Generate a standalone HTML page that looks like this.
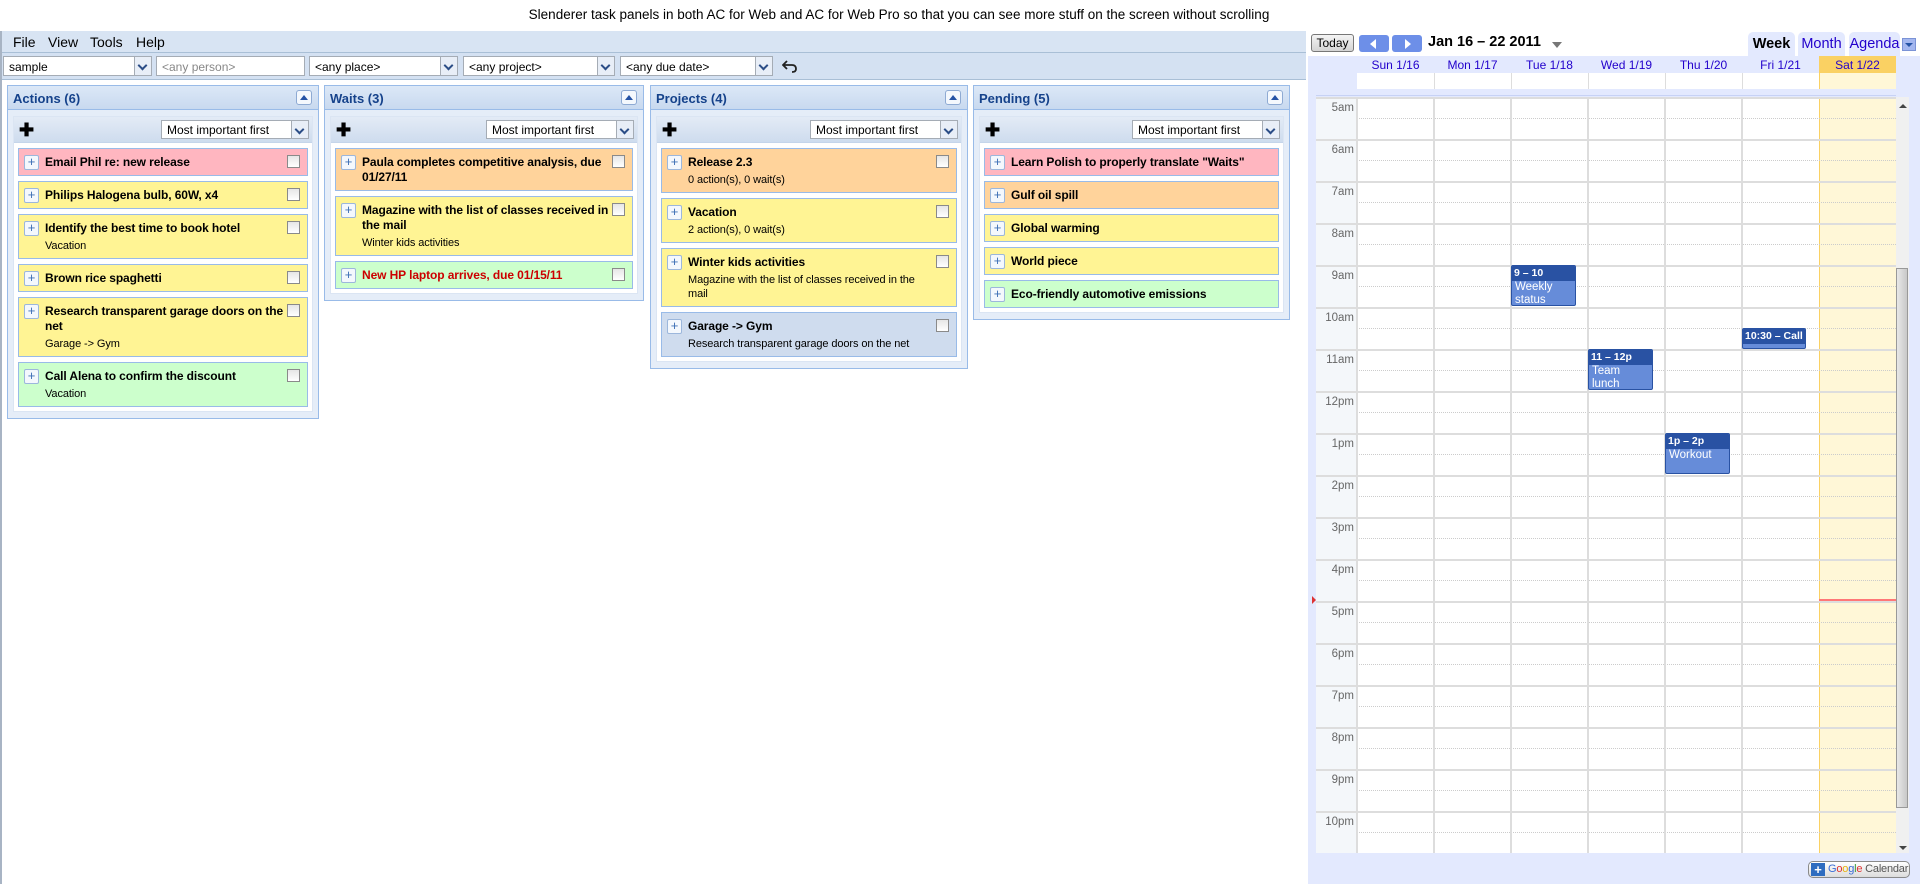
<!DOCTYPE html>
<html><head><meta charset="utf-8"><style>
*{box-sizing:border-box;margin:0;padding:0}
body{width:1920px;height:884px;overflow:hidden;background:#fff;font-family:"Liberation Sans",Arial,sans-serif;position:relative}
.abs{position:absolute}
#title{left:0;width:1798px;top:7px;text-align:center;font-size:13.5px;color:#000}
#left{left:0;top:31px;width:1306px;height:853px;border-left:2px solid #a8b4c4}
#menu{left:2px;top:31px;width:1304px;height:22px;background:#d8e4f3;border-bottom:1px solid #a9bfd6;font-size:14px}
#menu span{position:absolute;top:3px}
#filt{left:2px;top:53px;width:1304px;height:27px;background:#d4e1f2;border-bottom:1px solid #a9bfd6}
.inp{position:absolute;top:3px;height:20px;background:#fff;border:1px solid #a5acb5;font-size:12px;padding:3px 0 0 5px;color:#000}
.inp .dd{position:absolute;right:0;top:0;width:17px;height:18px;border-left:1px solid #a5acb5;background:#e8eef7}
.dd:after{content:"";position:absolute;left:4px;top:5px;width:5px;height:5px;border-right:2px solid #2b4d86;border-bottom:2px solid #2b4d86;transform:rotate(45deg)}
.panel{position:absolute;top:85px;background:#e5edf8;border:1px solid #99bbe8;padding-bottom:6px}
.ph{height:24px;background:linear-gradient(#dce8f7,#c8d9ef);border-bottom:1px solid #99bbe8;font-weight:bold;color:#15428b;font-size:13px;padding:5px 0 0 5px;position:relative}
.cb{position:absolute;right:6px;top:4px;width:16px;height:15px;border:1px solid #8eaad3;border-radius:3px;background:#f4f8fd}
.cb:after{content:"";position:absolute;left:3px;top:4px;border-left:4px solid transparent;border-right:4px solid transparent;border-bottom:5px solid #2553a5}
.sub{margin:6px 5px 0 5px;background:#fff;border:1px solid #dbe5f3;padding-bottom:4px}
.tb{height:26px;background:linear-gradient(#e3ebf6,#cedcee);position:relative;border-bottom:1px solid #c5d5ea}
.plus{position:absolute;left:5px;top:4px;font-size:18px;line-height:18px;color:#000;font-weight:bold}
.sel{position:absolute;right:3px;top:3px;width:148px;height:19px;background:#fff;border:1px solid #a5acb5;font-size:12px;padding:2px 0 0 5px}
.sel .dd{position:absolute;right:0;top:0;width:17px;height:17px;border-left:1px solid #a5acb5;background:#e8eef7}
.it{margin:5px 4px 0 4px;border:1px solid #99bbe8;padding:6px 20px 5px 26px;position:relative;font-size:12px;line-height:15px;font-weight:bold;letter-spacing:-0.1px}
.it .p{position:absolute;left:5px;top:6px;width:15px;height:15px;border:1px solid #9cb7dc;border-radius:2px;background:#f4f8fd;color:#3d6fb5;font-size:13px;line-height:12px;text-align:center;font-weight:normal}
.it .c{position:absolute;right:7px;top:6px;width:13px;height:13px;border:1px solid #8a8a8a;background:linear-gradient(#e6e6e6,#fff)}
.it small{display:block;font-weight:normal;font-size:11px;line-height:14px;margin-top:3px}
.pk{background:#ffb6c0}.ye{background:#fff494}.or{background:#ffd39b}.gr{background:#ccffcc}.bl{background:#cfdcee}
#cal{left:1308px;top:31px;width:612px;height:853px;background:#e3e9fe}
.btn{position:absolute;border-radius:3px}
.tab{position:absolute;top:32px;height:25px;background:#e3e9fe;border-radius:5px 5px 0 0;font-size:14.5px;color:#2200cc;text-align:center;padding-top:4px;white-space:nowrap}
.dh{position:absolute;top:56px;height:17px;font-size:12px;color:#2200cc;text-align:center;padding-top:2px;width:77px}
.grid{position:absolute;left:1316px;top:97px;width:580px;height:756px;background:#fff;overflow:hidden}
.hl{position:absolute;left:0;width:580px;height:0;border-top:2px solid #ddd}
.hh{position:absolute;left:41px;width:539px;height:0;border-top:1px dotted #ccc}
.tl{position:absolute;left:0;width:38px;text-align:right;font-size:11.5px;color:#666}
.vl{position:absolute;top:0;height:756px;border-left:2px solid #ddd}
.ev{position:absolute;border:1px solid #2952a3;border-radius:2px;background:#668cd9;color:#fff;font-size:11.5px;line-height:13px;overflow:hidden}
.ev b{display:block;background:#2952a3;font-size:10.5px;padding:1px 2px;white-space:nowrap}
.ev span{display:block;padding:0 3px}
</style></head><body>
<div id="title" class="abs">Slenderer task panels in both AC for Web and AC for Web Pro so that you can see more stuff on the screen without scrolling</div>
<div id="left" class="abs"></div>
<div id="menu" class="abs"><span style="left:11px">File</span><span style="left:46px">View</span><span style="left:88px">Tools</span><span style="left:134px">Help</span></div>
<div id="filt" class="abs">
<div class="inp" style="left:1px;width:149px">sample<div class="dd"></div></div>
<div class="inp" style="left:154px;width:149px;color:#888">&lt;any person&gt;</div>
<div class="inp" style="left:307px;width:149px">&lt;any place&gt;<div class="dd"></div></div>
<div class="inp" style="left:461px;width:152px">&lt;any project&gt;<div class="dd"></div></div>
<div class="inp" style="left:618px;width:153px">&lt;any due date&gt;<div class="dd"></div></div>
<svg class="abs" style="left:780px;top:6px" width="16" height="14" viewBox="0 0 16 14"><path d="M5 2 L1 6 L5 10 M1 6 H10 Q14 6 14 10 Q14 13 10 13" fill="none" stroke="#222" stroke-width="1.8"/></svg>
</div>

<div class="panel" style="left:7px;width:312px"><div class="ph">Actions (6)<div class="cb"></div></div><div class="sub"><div class="tb"><div class="plus">✚</div><div class="sel">Most important first<div class="dd"></div></div></div>
<div class="it pk"><div class="p">+</div>Email Phil re: new release<div class="c"></div></div>
<div class="it ye"><div class="p">+</div>Philips Halogena bulb, 60W, x4<div class="c"></div></div>
<div class="it ye"><div class="p">+</div>Identify the best time to book hotel<small>Vacation</small><div class="c"></div></div>
<div class="it ye"><div class="p">+</div>Brown rice spaghetti<div class="c"></div></div>
<div class="it ye"><div class="p">+</div>Research transparent garage doors on the net<small>Garage -&gt; Gym</small><div class="c"></div></div>
<div class="it gr"><div class="p">+</div>Call Alena to confirm the discount<small>Vacation</small><div class="c"></div></div>
</div></div>

<div class="panel" style="left:324px;width:320px"><div class="ph">Waits (3)<div class="cb"></div></div><div class="sub"><div class="tb"><div class="plus">✚</div><div class="sel">Most important first<div class="dd"></div></div></div>
<div class="it or"><div class="p">+</div>Paula completes competitive analysis, due 01/27/11<div class="c"></div></div>
<div class="it ye"><div class="p">+</div>Magazine with the list of classes received in the mail<small>Winter kids activities</small><div class="c"></div></div>
<div class="it gr" style="color:#cc0000"><div class="p">+</div>New HP laptop arrives, due 01/15/11<div class="c"></div></div>
</div></div>

<div class="panel" style="left:650px;width:318px"><div class="ph">Projects (4)<div class="cb"></div></div><div class="sub"><div class="tb"><div class="plus">✚</div><div class="sel">Most important first<div class="dd"></div></div></div>
<div class="it or"><div class="p">+</div>Release 2.3<small>0 action(s), 0 wait(s)</small><div class="c"></div></div>
<div class="it ye"><div class="p">+</div>Vacation<small>2 action(s), 0 wait(s)</small><div class="c"></div></div>
<div class="it ye"><div class="p">+</div>Winter kids activities<small>Magazine with the list of classes received in the mail</small><div class="c"></div></div>
<div class="it bl"><div class="p">+</div>Garage -&gt; Gym<small>Research transparent garage doors on the net</small><div class="c"></div></div>
</div></div>

<div class="panel" style="left:973px;width:317px"><div class="ph">Pending (5)<div class="cb"></div></div><div class="sub"><div class="tb"><div class="plus">✚</div><div class="sel">Most important first<div class="dd"></div></div></div>
<div class="it pk" style="padding-right:6px"><div class="p">+</div>Learn Polish to properly translate "Waits"</div>
<div class="it or"><div class="p">+</div>Gulf oil spill</div>
<div class="it ye"><div class="p">+</div>Global warming</div>
<div class="it ye"><div class="p">+</div>World piece</div>
<div class="it gr"><div class="p">+</div>Eco-friendly automotive emissions</div>
</div></div>

<div id="cal" class="abs"></div>
<div class="abs" style="left:1308px;top:31px;width:612px;height:25px;background:#fff"></div>
<div class="btn abs" style="left:1311px;top:34px;width:43px;height:18px;border:1px solid #777;background:linear-gradient(#f4f4f4,#d4d4d4);font-size:12px;text-align:center;padding-top:1px">Today</div>
<div class="btn abs" style="left:1359px;top:35px;width:30px;height:17px;background:#6d8fe8"><div style="position:absolute;left:11px;top:4px;border-top:5px solid transparent;border-bottom:5px solid transparent;border-right:6px solid #fff"></div></div>
<div class="btn abs" style="left:1392px;top:35px;width:30px;height:17px;background:#6d8fe8"><div style="position:absolute;left:13px;top:4px;border-top:5px solid transparent;border-bottom:5px solid transparent;border-left:6px solid #fff"></div></div>
<div class="abs" style="left:1428px;top:34px;font-size:14.5px;font-weight:bold">Jan 16 – 22 2011</div>
<div class="abs" style="left:1552px;top:42px;border-left:5px solid transparent;border-right:5px solid transparent;border-top:6px solid #777"></div>
<div class="tab" style="left:1748px;width:47px;color:#000;font-weight:bold">Week</div>
<div class="tab" style="left:1798px;width:47px">Month</div>
<div class="tab" style="left:1849px;width:51px">Agenda</div>
<div class="abs" style="left:1902px;top:38px;width:14px;height:13px;background:#a4b7ef;border:1px solid #7b93d6"><div style="position:absolute;left:2px;top:4px;border-left:4px solid transparent;border-right:4px solid transparent;border-top:4px solid #2553a5"></div></div>
<div class="dh" style="left:1357px">Sun 1/16</div><div class="dh" style="left:1434px">Mon 1/17</div><div class="dh" style="left:1511px">Tue 1/18</div><div class="dh" style="left:1588px">Wed 1/19</div><div class="dh" style="left:1665px">Thu 1/20</div><div class="dh" style="left:1742px">Fri 1/21</div><div class="dh" style="left:1819px;background:#fad163">Sat 1/22</div>
<div class="abs" style="left:1357px;top:73px;width:539px;height:16px;background:#fff"></div>
<div class="abs" style="left:1819px;top:73px;width:77px;height:16px;background:#fff7d7"></div>
<div class="abs" style="left:1434px;top:73px;height:16px;border-left:1px solid #ddd"></div><div class="abs" style="left:1511px;top:73px;height:16px;border-left:1px solid #ddd"></div><div class="abs" style="left:1588px;top:73px;height:16px;border-left:1px solid #ddd"></div><div class="abs" style="left:1665px;top:73px;height:16px;border-left:1px solid #ddd"></div><div class="abs" style="left:1742px;top:73px;height:16px;border-left:1px solid #ddd"></div><div class="abs" style="left:1819px;top:73px;height:16px;border-left:1px solid #fad163"></div>
<div class="abs" style="left:1316px;top:95px;width:580px;border-top:1px solid #c7d2f5"></div>

<div class="grid">
<div class="abs" style="left:0;top:0;width:41px;height:756px;background:#f4f7fa"></div>
<div class="abs" style="left:503px;top:0;width:77px;height:756px;background:#fff7d7;border-left:1px solid #fad163"></div>
<div class="hl" style="top:0"></div><div class="hl" style="top:42px"></div><div class="hl" style="top:84px"></div><div class="hl" style="top:126px"></div><div class="hl" style="top:168px"></div><div class="hl" style="top:210px"></div><div class="hl" style="top:252px"></div><div class="hl" style="top:294px"></div><div class="hl" style="top:336px"></div><div class="hl" style="top:378px"></div><div class="hl" style="top:420px"></div><div class="hl" style="top:462px"></div><div class="hl" style="top:504px"></div><div class="hl" style="top:546px"></div><div class="hl" style="top:588px"></div><div class="hl" style="top:630px"></div><div class="hl" style="top:672px"></div><div class="hl" style="top:714px"></div>
<div class="hh" style="top:21px"></div><div class="hh" style="top:63px"></div><div class="hh" style="top:105px"></div><div class="hh" style="top:147px"></div><div class="hh" style="top:189px"></div><div class="hh" style="top:231px"></div><div class="hh" style="top:273px"></div><div class="hh" style="top:315px"></div><div class="hh" style="top:357px"></div><div class="hh" style="top:399px"></div><div class="hh" style="top:441px"></div><div class="hh" style="top:483px"></div><div class="hh" style="top:525px"></div><div class="hh" style="top:567px"></div><div class="hh" style="top:609px"></div><div class="hh" style="top:651px"></div><div class="hh" style="top:693px"></div><div class="hh" style="top:735px"></div>
<div class="tl" style="top:5px">5am</div><div class="tl" style="top:47px">6am</div><div class="tl" style="top:89px">7am</div><div class="tl" style="top:131px">8am</div><div class="tl" style="top:173px">9am</div><div class="tl" style="top:215px">10am</div><div class="tl" style="top:257px">11am</div><div class="tl" style="top:299px">12pm</div><div class="tl" style="top:341px">1pm</div><div class="tl" style="top:383px">2pm</div><div class="tl" style="top:425px">3pm</div><div class="tl" style="top:467px">4pm</div><div class="tl" style="top:509px">5pm</div><div class="tl" style="top:551px">6pm</div><div class="tl" style="top:593px">7pm</div><div class="tl" style="top:635px">8pm</div><div class="tl" style="top:677px">9pm</div><div class="tl" style="top:719px">10pm</div>
<div class="vl" style="left:40px"></div><div class="vl" style="left:117px"></div><div class="vl" style="left:194px"></div><div class="vl" style="left:271px"></div><div class="vl" style="left:348px"></div><div class="vl" style="left:425px"></div>
<div class="abs" style="left:503px;top:502px;width:77px;height:2px;background:#f77"></div>
<div class="ev" style="left:195px;top:168px;width:65px;height:41px"><b>9 – 10</b><span>Weekly status</span></div>
<div class="ev" style="left:272px;top:252px;width:65px;height:41px"><b>11 – 12p</b><span>Team lunch</span></div>
<div class="ev" style="left:349px;top:336px;width:65px;height:41px"><b>1p – 2p</b><span>Workout</span></div>
<div class="ev" style="left:426px;top:231px;width:64px;height:21px"><b>10:30 – Call J</b></div>
</div>
<div class="abs" style="left:1312px;top:596px;border-top:4px solid transparent;border-bottom:4px solid transparent;border-left:4px solid #d33"></div>
<div class="abs" style="left:1896px;top:97px;width:13px;height:756px;background:#f0f0f0"></div>
<div class="abs" style="left:1896px;top:268px;width:12px;height:540px;background:linear-gradient(90deg,#e8e8e8,#c8c8c8);border:1px solid #999"></div>
<div class="abs" style="left:1899px;top:104px;border-left:4px solid transparent;border-right:4px solid transparent;border-bottom:4px solid #444"></div>
<div class="abs" style="left:1899px;top:846px;border-left:4px solid transparent;border-right:4px solid transparent;border-top:4px solid #444"></div>
<div class="abs" style="left:1808px;top:861px;width:102px;height:17px;border:1px solid #8a8a8a;border-radius:5px;background:linear-gradient(#fff,#dcdcdc);font-size:11px;padding:1px 0 0 19px;color:#555;white-space:nowrap;letter-spacing:-0.2px"><span style="position:absolute;left:2px;top:1px;width:14px;height:13px;background:#2e6cc0;color:#fff;font-weight:bold;text-align:center;line-height:13px;font-size:13px">+</span><span style="color:#3a6cd6">G</span><span style="color:#d33">o</span><span style="color:#e8b10e">o</span><span style="color:#3a6cd6">g</span><span style="color:#3a9a3a">l</span><span style="color:#d33">e</span> Calendar</div>
</body></html>
